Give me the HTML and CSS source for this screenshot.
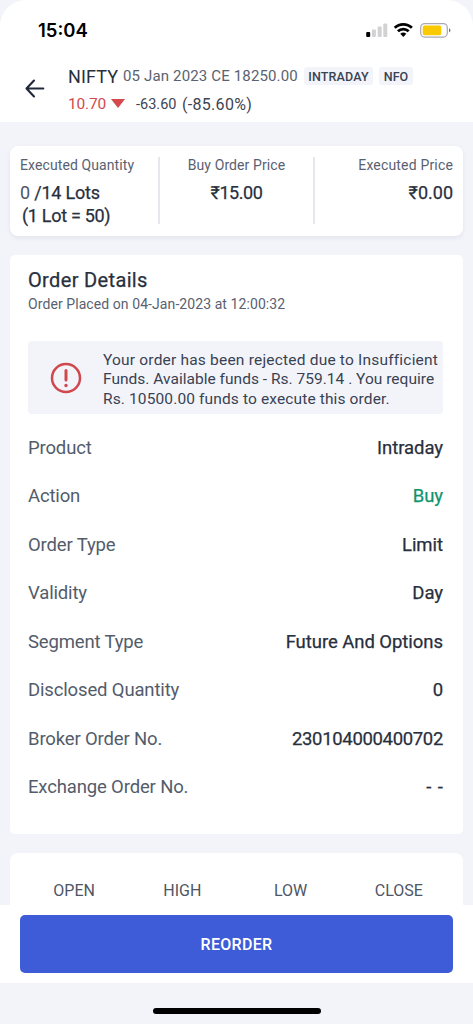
FILE: index.html
```html
<!DOCTYPE html>
<html lang="en">
<head>
<meta charset="utf-8">
<title>Order Details</title>
<link rel="stylesheet" href="styles.css">
</head>
<body>
<div class="screen">
  <div class="top">
    <div class="status">
      <span class="clock">15:04</span>
      <svg class="status-icons" width="90" height="20" viewBox="0 0 90 20">
        <rect x="3.2" y="12" width="4" height="5" rx="1"/>
        <g fill="#d2d2d4"><rect x="8.9" y="9.5" width="4" height="7.5" rx="1"/><rect x="14.7" y="6.5" width="4" height="10.5" rx="1"/><rect x="20.3" y="3.5" width="4" height="13.5" rx="1"/></g>
        <g fill="none" stroke="#000" stroke-width="2.7"><path d="M31.700 7.800a12.300 12.300 0 0 1 17.200 0"/><path d="M34.900 11.300a7.700 7.700 0 0 1 10.800 0"/></g>
        <path d="M37.300 13.800a4.500 4.500 0 0 1 6 0L40.300 16.900z"/>
        <rect x="57.700" y="3.600" width="26.600" height="13.500" rx="4" fill="#fff" stroke="#aaa7b0" stroke-width="1.200"/>
        <rect x="59.700" y="5.500" width="18.600" height="9.700" rx="2" fill="#fbc900"/>
        <path d="M86 8.200v4.200q1.400-.7 1.400-2.100T86 8.200z" fill="#77737c"/>
      </svg>
    </div>
    <header class="header">
      <svg class="back" width="22" height="22" viewBox="0 0 22 22"><path d="M10 2.500L2.500 10.500l7.500 8M2.500 10.500H19.300" fill="none" stroke="#20283a" stroke-width="2.100" stroke-linecap="round" stroke-linejoin="round"/></svg>
      <div class="instrument">
        <div class="line name-line"><span class="symbol">NIFTY</span><span class="contract">05 Jan 2023 CE 18250.00</span><span class="tag tag-product">INTRADAY</span><span class="tag tag-exchange">NFO</span></div>
        <div class="line price-line"><span class="price">10.70</span><svg class="down" width="14" height="9" viewBox="0 0 14 9"><path d="M0 0h14L7 9z" fill="#d3494c"/></svg><span class="change">-63.60</span><span class="percent">(-85.60%)</span></div>
      </div>
    </header>
  </div>

  <main class="content">
    <section class="card summary">
      <div class="stat"><div class="stat-label">Executed Quantity</div><div class="stat-value"><span class="muted">0</span> /14 Lots</div><div class="stat-value lot">(1 Lot = 50)</div></div>
      <div class="stat center"><div class="stat-label">Buy Order Price</div><div class="stat-value">₹15.00</div></div>
      <div class="stat right"><div class="stat-label">Executed Price</div><div class="stat-value">₹0.00</div></div>
    </section>

    <section class="card details">
      <h1 class="title">Order Details</h1>
      <p class="placed">Order Placed on 04-Jan-2023 at 12:00:32</p>
      <div class="alert">
        <svg class="alert-icon" width="32" height="32" viewBox="0 0 32 32"><circle cx="16" cy="16" r="14" fill="none" stroke="#cf484d" stroke-width="2.500"/><path d="M16 8.500v9.500" stroke="#cf484d" stroke-width="3" stroke-linecap="round"/><circle cx="16" cy="23.500" r="1.700" fill="#cf484d"/></svg>
        <p class="alert-text"><span class="a1">Your order has been rejected due to Insufficient</span><br><span class="a2">Funds. Available funds - Rs. 759.14 . You require</span><br><span class="a3">Rs. 10500.00 funds to execute this order.</span></p>
      </div>
      <dl class="rows">
        <div class="row"><dt>Product</dt><dd>Intraday</dd></div>
        <div class="row"><dt>Action</dt><dd class="buy">Buy</dd></div>
        <div class="row"><dt>Order Type</dt><dd>Limit</dd></div>
        <div class="row"><dt>Validity</dt><dd>Day</dd></div>
        <div class="row"><dt>Segment Type</dt><dd>Future And Options</dd></div>
        <div class="row"><dt>Disclosed Quantity</dt><dd>0</dd></div>
        <div class="row"><dt>Broker Order No.</dt><dd class="number">230104000400702</dd></div>
        <div class="row"><dt>Exchange Order No.</dt><dd class="dashes">- -</dd></div>
      </dl>
    </section>

    <section class="card ohlc"><span>OPEN</span><span>HIGH</span><span>LOW</span><span>CLOSE</span></section>
  </main>

  <footer class="action-bar"><button class="reorder">REORDER</button></footer>
  <div class="home"><div class="home-bar"></div></div>
</div>
</body>
</html>
```
FILE: styles.css
```css
* { box-sizing: border-box; }
body { margin: 0; background: #f3f4fa; font-family: Roboto, "Liberation Sans", sans-serif; color: #282f3d; }
h1, p, dl, dd { margin: 0; }
svg { display: block; flex: none; }
.screen { height: 1024px; display: flex; flex-direction: column; overflow: hidden; background: #f3f4fa; }
.top { height: 122px; flex: none; background: #fff; border-radius: 26px 26px 0 0; }
.status { height: 61px; padding: 20px 20px 0 38px; display: flex; justify-content: space-between; align-items: flex-start; }
.clock { font: 600 18.500px/21px Inter, sans-serif; color: #000; }
.header { display: flex; padding-left: 24px; height: 61px; }
.back { margin-top: 17px; }
.instrument { margin-left: 22px; padding-top: 4px; }
.line { display: flex; align-items: center; white-space: nowrap; }
.name-line { height: 22px; }
.price-line { height: 22px; margin-top: 6px; }
.symbol { font-size: 18px; width: 55px; letter-spacing: .1px; }
.contract { font-size: 15px; font-weight: 400; width: 181px; letter-spacing: .15px; color: #5a6270; }
.tag { background: #f3f4fa; border-radius: 3px; font-size: 12.500px; font-weight: 500; height: 18px; line-height: 19px; text-align: center; color: #394252; }
.tag-product { width: 69px; letter-spacing: .15px; }
.tag-exchange { width: 34px; margin-left: 6px; letter-spacing: 0; }
.price { color: #d3494c; font-size: 15.500px; width: 43px; letter-spacing: -.2px; }
.down { position: relative; top: -1px; }
.change { font-size: 14.500px; margin-left: 11px; width: 46px; color: #3d4553; }
.percent { font-size: 16px; letter-spacing: .3px; color: #3d4553; }
.content { flex: 1; min-height: 0; overflow: hidden; padding: 24px 10px 0; display: flex; flex-direction: column; }
.card { background: #fff; flex: none; }
.summary { height: 90px; border-radius: 8px; box-shadow: 0 2px 4px #e3e4ec; padding: 11px 10px; display: grid; grid-template-columns: 140px 155px 1fr; }
.stat { height: 67px; }
.stat.center { border: solid #e6e6ed; border-width: 0 2px; text-align: center; margin-left: -2px; }
.stat.right { text-align: right; }
.stat-label { font-size: 14px; line-height: 17px; letter-spacing: .1px; color: #596171; }
.right .stat-label { letter-spacing: .17px; }
.stat-value { font-size: 18px; line-height: 22px; margin-top: 8px; white-space: nowrap; letter-spacing: -.2px; }
.stat-value, .title, .row dd { -webkit-text-stroke: .25px currentColor; }
.center .stat-value { letter-spacing: -.45px; }
.stat-value.lot { margin-top: 1px; padding-left: 2px; letter-spacing: -.3px; }
.right .stat-value { letter-spacing: 0; }
.muted { color: #4d5563; -webkit-text-stroke: 0; }
.details { height: 579px; margin-top: 19px; border-radius: 5px; padding: 13px 20px 0 18px; }
.title { font-size: 20px; line-height: 24px; font-weight: 400; letter-spacing: .35px; }
.placed { font-size: 14px; line-height: 18px; margin-top: 3px; letter-spacing: .08px; color: #596171; }
.alert { height: 73px; margin-top: 28px; background: #f3f4fa; border-radius: 4px; display: flex; align-items: center; padding-left: 22px; }
.alert-icon { margin-right: 21px; }
.alert-text { font-size: 15.500px; line-height: 19.500px; color: #394252; white-space: nowrap; padding-top: 5px; }
.a1 { letter-spacing: .2px; }
.a2 { letter-spacing: .02px; }
.a3 { letter-spacing: .13px; }
.rows { margin-top: 9.500px; }
.row { height: 48.500px; display: flex; justify-content: space-between; align-items: center; white-space: nowrap; font-size: 18.500px; }
.row dt { letter-spacing: -.15px; color: #535c6b; }
.row dd { color: #282f3d; letter-spacing: -.05px; }
.row .number { letter-spacing: -.33px; }
.row .dashes { letter-spacing: 1px; margin-right: -1px; }
.row .buy { color: #10956d; }
.ohlc { height: 100px; margin-top: 19px; border-radius: 8px 8px 0 0; padding: 28px 10px 0; display: grid; grid-template-columns: repeat(4, 1fr); text-align: center; font-size: 16px; line-height: 20px; color: #4d5665; }
.action-bar { height: 78px; flex: none; background: #fff; padding: 10px 20px; }
.reorder { display: block; width: 100%; height: 58px; padding: 1px 0 0; border: 0; border-radius: 5px; background: #3e5bd8; color: #fff; font: 500 16px/58px Roboto, sans-serif; letter-spacing: .3px; }
.home { height: 41px; flex: none; padding-top: 25px; }
.home-bar { width: 168px; height: 6px; border-radius: 3px; background: #000; margin: 0 auto; }
```
